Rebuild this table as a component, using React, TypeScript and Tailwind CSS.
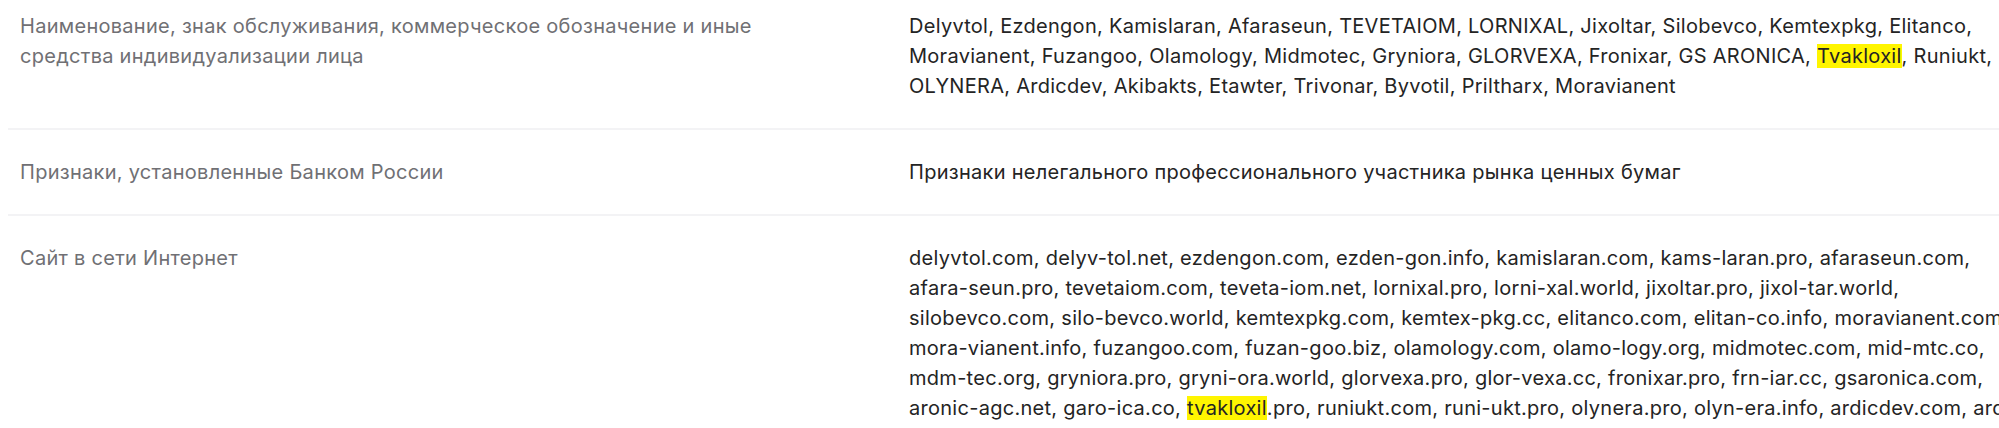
const nameLines = [
  [
    "Delyvtol, Ezdengon, Kamislaran, Afaraseun, TEVETAIOM, LORNIXAL, Jixoltar, Silobevco, Kemtexpkg, Elitanco,",
  ],
  [
    "Moravianent, Fuzangoo, Olamology, Midmotec, Gryniora, GLORVEXA, Fronixar, GS ARONICA, ",
    "Tvakloxil",
    ", Runiukt,",
  ],
  ["OLYNERA, Ardicdev, Akibakts, Etawter, Trivonar, Byvotil, Priltharx, Moravianent"],
];

const siteLines = [
  ["delyvtol.com, delyv-tol.net, ezdengon.com, ezden-gon.info, kamislaran.com, kams-laran.pro, afaraseun.com,"],
  ["afara-seun.pro, tevetaiom.com, teveta-iom.net, lornixal.pro, lorni-xal.world, jixoltar.pro, jixol-tar.world,"],
  ["silobevco.com, silo-bevco.world, kemtexpkg.com, kemtex-pkg.cc, elitanco.com, elitan-co.info, moravianent.com,"],
  ["mora-vianent.info, fuzangoo.com, fuzan-goo.biz, olamology.com, olamo-logy.org, midmotec.com, mid-mtc.co,"],
  ["mdm-tec.org, gryniora.pro, gryni-ora.world, glorvexa.pro, glor-vexa.cc, fronixar.pro, frn-iar.cc, gsaronica.com,"],
  ["aronic-agc.net, garo-ica.co, ", "tvakloxil", ".pro, runiukt.com, runi-ukt.pro, olynera.pro, olyn-era.info, ardicdev.com, ardic-dev.net,"],
  ["akibakts.com, akib-akts.pro, etawter.com, eta-wter.net, trivonar.com, trivo-nar.info, byvotil.com, priltharx.com"],
];

function Lines({ lines }: { lines: string[][] }) {
  return (
    <div>
      {lines.map((parts, i) => (
        <div key={i} className="whitespace-nowrap">
          {parts.map((p, j) =>
            j === 1 ? (
              <span key={j} className="bg-[#fff500]">
                {p}
              </span>
            ) : (
              <span key={j}>{p}</span>
            )
          )}
        </div>
      ))}
    </div>
  );
}

function Row({ label, children }: { label: string; children: React.ReactNode }) {
  return (
    <div className="grid grid-cols-[889px_1fr] border-b-2 border-[#f3f3f5] py-[27px]">
      <div className="pl-3 pr-4 text-[#707074]">
        <div className="w-[790px]">{label}</div>
      </div>
      <div className="pl-3 text-[#242424]">{children}</div>
    </div>
  );
}

export default function App() {
  return (
    <div className="h-[428px] w-full overflow-hidden bg-white font-['Inter','Noto_Sans',sans-serif]">
      <div className="-mt-[16px] ml-2 w-[2060px] text-[20px] leading-[30px] tracking-[0.28px]">
        <Row label="Наименование, знак обслуживания, коммерческое обозначение и иные средства индивидуализации лица">
          <Lines lines={nameLines} />
        </Row>
        <Row label="Признаки, установленные Банком России">
          <div>Признаки нелегального профессионального участника рынка ценных бумаг</div>
        </Row>
        <Row label="Сайт в сети Интернет">
          <Lines lines={siteLines} />
        </Row>
      </div>
    </div>
  );
}
